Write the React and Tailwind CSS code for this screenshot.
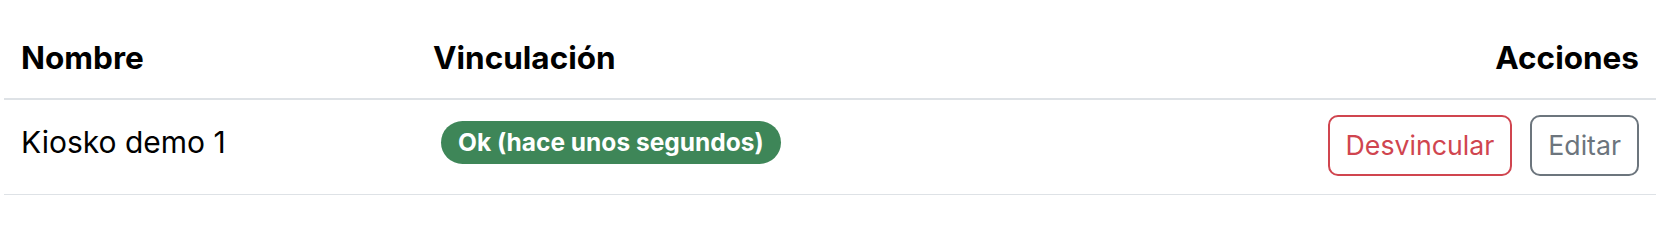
export default function App() {
  const rows = [{ id: 1, name: "Kiosko demo 1", status: "Ok (hace unos segundos)" }];

  return (
    <div
      className="bg-white w-[1678px] h-[228px] pt-[21px] pl-[4px]"
      style={{ fontFamily: "Inter, 'Liberation Sans', sans-serif" }}
    >
      <table className="w-[1652px] border-collapse text-black">
        <thead>
          <tr className="border-b-2 border-[#dee2e6]">
            <th className="w-[412px] px-[17px] pt-[15px] pb-[19px] text-left text-[31.5px] leading-[43px] font-bold">
              Nombre
            </th>
            <th className="px-[17px] pt-[15px] pb-[19px] text-left text-[31.5px] leading-[43px] font-bold">
              Vinculación
            </th>
            <th className="px-[17px] pt-[15px] pb-[19px] text-right text-[31.5px] leading-[43px] font-bold">
              Acciones
            </th>
          </tr>
        </thead>
        <tbody>
          {rows.map((row) => (
            <tr key={row.id} className="border-b border-[#dee2e6]">
              <td className="px-[17px] pt-[21px] align-top text-[30px] leading-[42px]">
                {row.name}
              </td>
              <td className="px-[17px] pt-[21px] align-top">
                <div className="flex">
                  <span className="ml-[8px] flex items-center h-[43px] px-[17px] rounded-full bg-[#3e8658] text-white text-[24.5px] font-bold">
                    {row.status}
                  </span>
                </div>
              </td>
              <td className="px-[17px] pt-[15px] pb-[18px] align-top">
                <div className="flex justify-end gap-[18px]">
                  <button className="h-[61px] px-[16px] border-2 border-[#d0454f] text-[#d0454f] rounded-[10px] text-[26.7px]">
                    Desvincular
                  </button>
                  <button className="h-[61px] px-[16px] border-2 border-[#6c757d] text-[#6c757d] rounded-[10px] text-[26.7px]">
                    Editar
                  </button>
                </div>
              </td>
            </tr>
          ))}
        </tbody>
      </table>
    </div>
  );
}
